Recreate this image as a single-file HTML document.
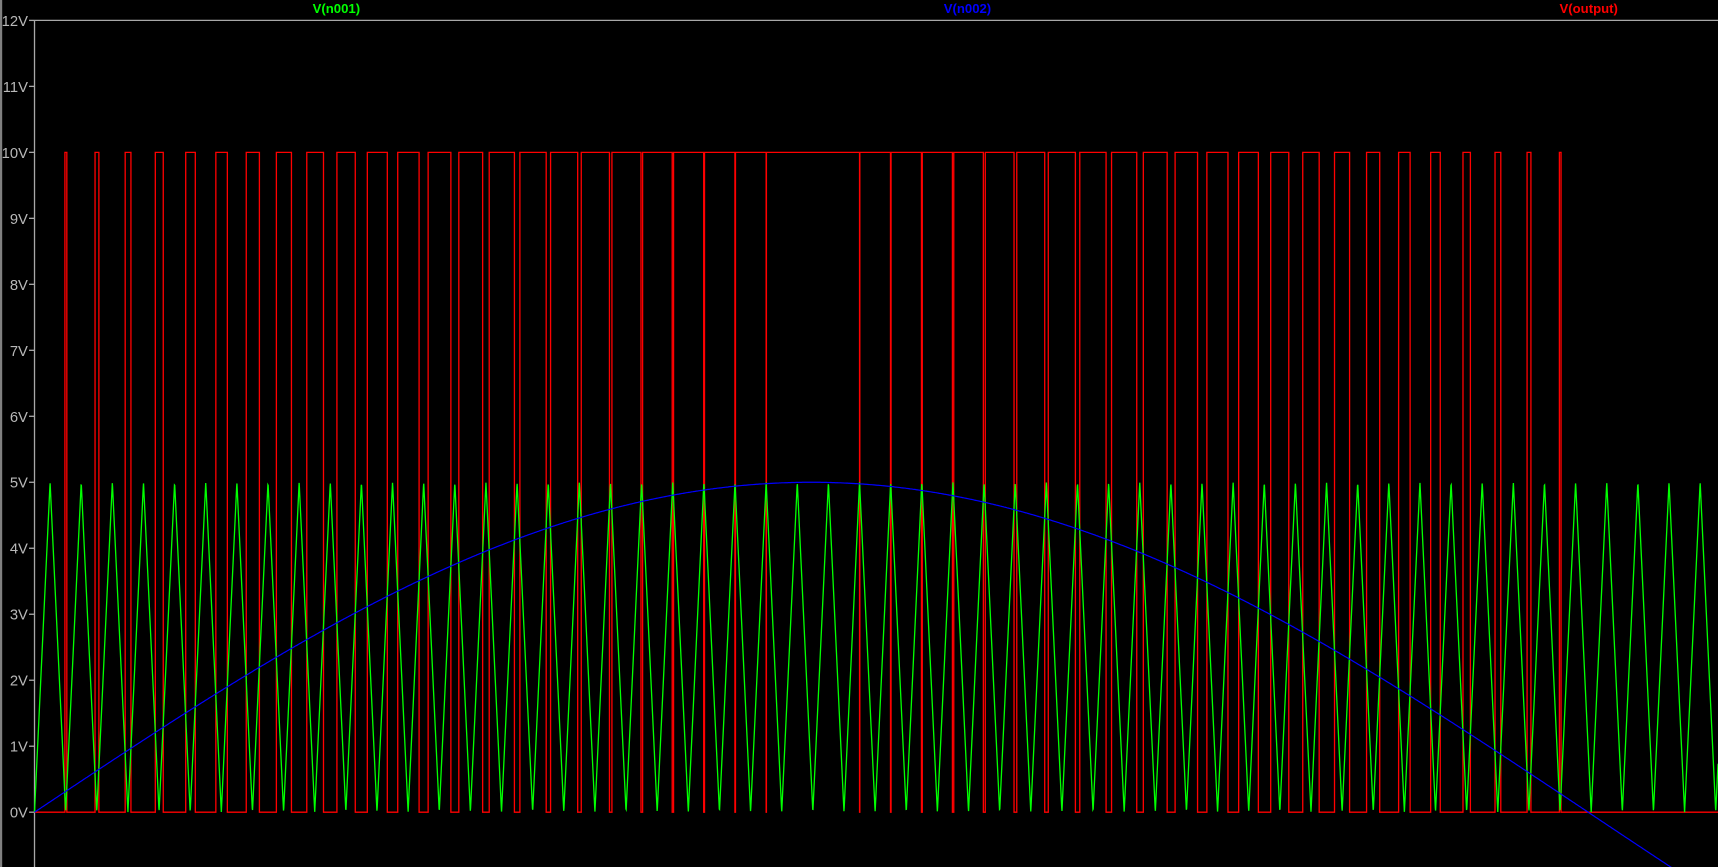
<!DOCTYPE html>
<html><head><meta charset="utf-8"><style>
html,body{margin:0;padding:0;background:#000;overflow:hidden}
svg{display:block}
</style></head><body>
<svg id="s" width="1718" height="867" viewBox="0 0 1568 791" preserveAspectRatio="none" xmlns="http://www.w3.org/2000/svg">
<rect width="1568" height="791" fill="#000"/>
<rect x="0" y="0" width="2" height="791" fill="#808080"/>
<g id="axis" stroke="#a8a8a8" stroke-width="1.2" fill="none"></g>
<g id="lab" fill="#b8b8b8" font-family="Liberation Sans, sans-serif" font-size="13.5" text-anchor="end"></g>
<path id="red" fill="none" stroke="#ff0000" stroke-width="1.2"/>
<path id="green" fill="none" stroke="#00ff00" stroke-width="1.2"/>
<path id="blue" fill="none" stroke="#0000ff" stroke-width="1.1"/>
<g font-family="Liberation Sans, sans-serif" font-size="12" font-weight="bold" text-anchor="middle">
<text x="307" y="12" fill="#00ff00">V(n001)</text>
<text x="883" y="12" fill="#0000ff">V(n002)</text>
<text x="1450" y="12" fill="#ff0000">V(output)</text>
</g>
</svg>
<script>
var NS="http://www.w3.org/2000/svg";
var X0=31.5,Y0=741,PV=60.2;
var ax=document.getElementById('axis'),lab=document.getElementById('lab');
function el(p,t,a){var e=document.createElementNS(NS,t);for(var k in a)e.setAttribute(k,a[k]);p.appendChild(e);return e;}
el(ax,'line',{x1:X0,y1:Y0-12*PV,x2:X0,y2:791});
el(ax,'line',{x1:X0,y1:Y0-12*PV,x2:1568,y2:Y0-12*PV});
for(var v=0;v<=12;v++){var y=Y0-v*PV;el(ax,'line',{x1:X0-5,y1:y,x2:X0,y2:y});
var t=el(lab,'text',{x:X0-6,y:y+5});t.textContent=v+'V';}
var P=(1552-46)/53;
function tri(x){var u=(x-X0)/P;u=u-Math.floor(u);return u<0.5?u*2*5:(1-u)*2*5;}
var HP=1418;
function sn(x){return 5*Math.sin(Math.PI*(x-X0)/HP);}
var g='',b='',r='';
for(var x=X0;x<=1568;x+=0.25){
 var yt=Y0-tri(x)*PV;g+=(x==X0?'M':'L')+x.toFixed(2)+' '+yt.toFixed(1);
}
for(var x=X0;x<=1568;x+=1){b+=(x==X0?'M':'L')+x+' '+(Y0-sn(x)*PV).toFixed(1);}
var prev=null;
for(var x=X0;x<=1568;x+=0.25){
 var hi=sn(x)>tri(x)?1:0;var y=hi?Y0-10*PV:Y0;
 if(prev===null)r+='M'+x+' '+y;else if(hi!==prev){r+='L'+x+' '+(prev?Y0-10*PV:Y0)+'L'+x+' '+y;}
 prev=hi;
}
r+='L1568 '+(prev?Y0-10*PV:Y0);
document.getElementById('green').setAttribute('d',g);
document.getElementById('blue').setAttribute('d',b);
document.getElementById('red').setAttribute('d',r);
</script>
</body></html>
